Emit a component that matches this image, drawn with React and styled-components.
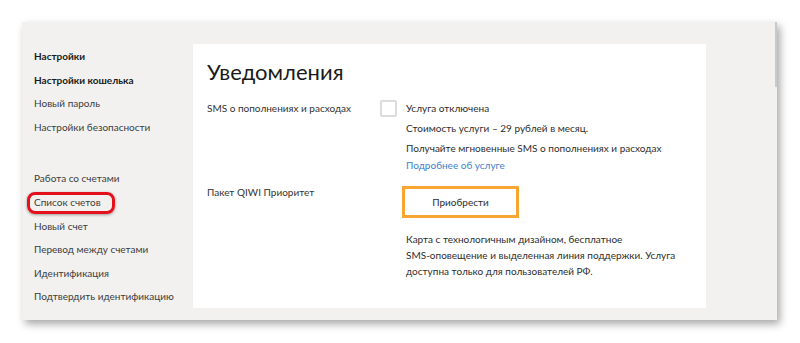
import React from 'react';
import styled, { createGlobalStyle } from 'styled-components';

const GlobalStyle = createGlobalStyle`
  html, body {
    margin: 0;
    padding: 0;
    background: #ffffff;
  }
  body {
    font-family: Lato, Roboto, "Liberation Sans", sans-serif;
    color: #333333;
  }
`;

const Page = styled.div`
  width: 800px;
  height: 343px;
  padding: 22px 0 0 22px;
  box-sizing: border-box;
`;

const Window = styled.div`
  position: relative;
  width: 755px;
  height: 298px;
  background: #f2f1f0;
  box-shadow: 3px 4px 8px rgba(0, 0, 0, 0.35);
  display: flex;
  box-sizing: border-box;
  padding: 22px 71px 12px 0;
`;

const Scrollbar = styled.div`
  position: absolute;
  top: 0;
  right: 0;
  width: 2px;
  height: 65px;
  background: #c9c9c9;
`;

const Sidebar = styled.nav`
  width: 171px;
  flex-shrink: 0;
  padding: 0 0 0 12px;
  box-sizing: border-box;
  margin-top: 1px;
`;

const MenuGroup = styled.ul`
  list-style: none;
  margin: 0 0 28px 0;
  padding: 0;
`;

const MenuItem = styled.li`
  position: relative;
  height: 23.6px;
  line-height: 23.6px;
  font-size: 10px;
  font-weight: ${({ bold }) => (bold ? 700 : 400)};
  color: ${({ bold }) => (bold ? '#1a1a1a' : '#3c3c3c')};
  white-space: nowrap;
`;

const Highlight = styled.span`
  position: absolute;
  left: -7px;
  top: 1px;
  width: 88px;
  height: 22px;
  box-sizing: border-box;
  border: 3px solid #e3111b;
  border-radius: 8px;
  box-shadow: 0 1px 3px rgba(0, 0, 0, 0.35);
`;

const Panel = styled.main`
  flex: 1;
  background: #ffffff;
  padding: 12px 0 0 14px;
  box-sizing: border-box;
`;

const Title = styled.h1`
  margin: 0 0 10px 0;
  font-size: 22px;
  font-weight: 400;
  line-height: 32px;
  color: #1a1a1a;
`;

const Row = styled.div`
  display: grid;
  grid-template-columns: 173px 1fr;
  margin-bottom: ${({ gap }) => gap || 0}px;
`;

const Label = styled.div`
  font-size: 10px;
  line-height: 20px;
  color: #333333;
  white-space: nowrap;
`;

const Line = styled.div`
  font-size: 10px;
  line-height: 20px;
  color: #2e2e2e;
  padding-left: ${({ indent }) => (indent ? 26 : 0)}px;
  display: flex;
  align-items: center;
  white-space: nowrap;
`;

const Checkbox = styled.span`
  width: 17px;
  height: 17px;
  box-sizing: border-box;
  border: 2px solid #dcdcdc;
  border-radius: 2px;
  margin-right: 9px;
  flex-shrink: 0;
`;

const Link = styled.a`
  color: #3d7fcf;
  text-decoration: none;
  font-size: 10px;
  line-height: 14px;
  padding-left: 26px;
  display: block;
`;

const Button = styled.button`
  display: block;
  margin: 4px 0 0 22px;
  width: 117px;
  height: 32px;
  background: #ffffff;
  border: 3px solid #f8a532;
  font-family: inherit;
  font-size: 10px;
  color: #2e2e2e;
  cursor: pointer;
`;

const Description = styled.p`
  margin: 13px 0 0 26px;
  font-size: 10px;
  line-height: 16px;
  color: #2e2e2e;
  white-space: nowrap;
`;

const App = () => (
  <>
    <GlobalStyle />
    <Page>
      <Window>
        <Scrollbar />
        <Sidebar>
          <MenuGroup>
            <MenuItem bold>Настройки</MenuItem>
            <MenuItem bold>Настройки кошелька</MenuItem>
            <MenuItem>Новый пароль</MenuItem>
            <MenuItem>Настройки безопасности</MenuItem>
          </MenuGroup>
          <MenuGroup>
            <MenuItem>Работа со счетами</MenuItem>
            <MenuItem>
              <Highlight />
              Список счетов
            </MenuItem>
            <MenuItem>Новый счет</MenuItem>
            <MenuItem>Перевод между счетами</MenuItem>
            <MenuItem>Идентификация</MenuItem>
            <MenuItem>Подтвердить идентификацию</MenuItem>
          </MenuGroup>
        </Sidebar>
        <Panel>
          <Title>Уведомления</Title>
          <Row gap={10}>
            <Label>SMS о пополнениях и расходах</Label>
            <div>
              <Line>
                <Checkbox />
                Услуга отключена
              </Line>
              <Line indent>Стоимость услуги – 29 рублей в месяц.</Line>
              <Line indent>Получайте мгновенные SMS о пополнениях и расходах</Line>
              <Link href="#">Подробнее об услуге</Link>
            </div>
          </Row>
          <Row>
            <Label>Пакет QIWI Приоритет</Label>
            <div>
              <Button>Приобрести</Button>
              <Description>
                Карта с технологичным дизайном, бесплатное
                <br />
                SMS-оповещение и выделенная линия поддержки. Услуга
                <br />
                доступна только для пользователей РФ.
              </Description>
            </div>
          </Row>
        </Panel>
      </Window>
    </Page>
  </>
);

export default App;
